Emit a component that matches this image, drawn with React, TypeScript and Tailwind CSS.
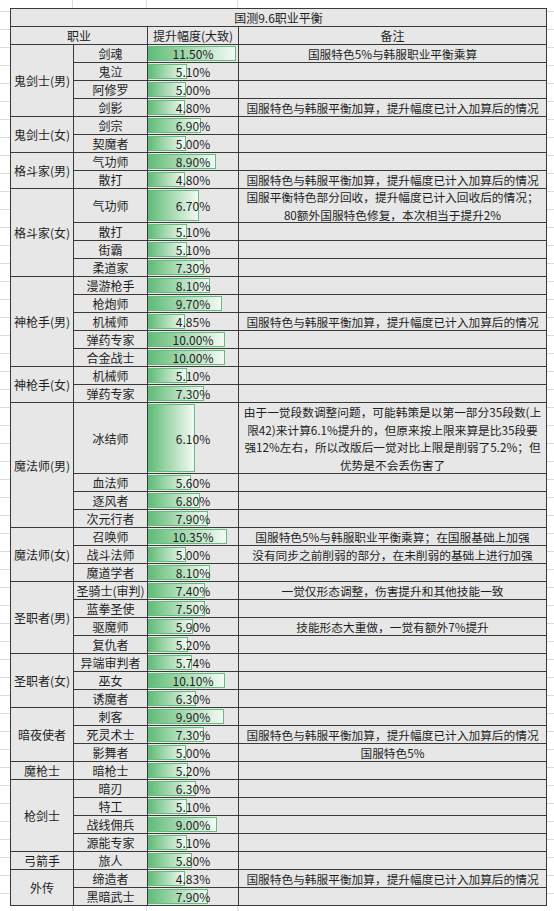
import React from "react";

type Row = { name: string; value: number; note?: React.ReactNode };
type Group = { name: string; rows: Row[] };

const ADD = "国服特色与韩服平衡加算，提升幅度已计入加算后的情况";

const groups: Group[] = [
  {
    name: "鬼剑士(男)",
    rows: [
      { name: "剑魂", value: 11.5, note: "国服特色5%与韩服职业平衡乘算" },
      { name: "鬼泣", value: 5.1 },
      { name: "阿修罗", value: 5.0 },
      { name: "剑影", value: 4.8, note: ADD },
    ],
  },
  { name: "鬼剑士(女)", rows: [{ name: "剑宗", value: 6.9 }, { name: "契魔者", value: 5.0 }] },
  { name: "格斗家(男)", rows: [{ name: "气功师", value: 8.9 }, { name: "散打", value: 4.8, note: ADD }] },
  {
    name: "格斗家(女)",
    rows: [
      {
        name: "气功师",
        value: 6.7,
        note: (
          <>
            国服平衡特色部分回收，提升幅度已计入回收后的情况；
            <br />
            80额外国服特色修复，本次相当于提升2%
          </>
        ),
      },
      { name: "散打", value: 5.1 },
      { name: "街霸", value: 5.1 },
      { name: "柔道家", value: 7.3 },
    ],
  },
  {
    name: "神枪手(男)",
    rows: [
      { name: "漫游枪手", value: 8.1 },
      { name: "枪炮师", value: 9.7 },
      { name: "机械师", value: 4.85, note: ADD },
      { name: "弹药专家", value: 10.0 },
      { name: "合金战士", value: 10.0 },
    ],
  },
  { name: "神枪手(女)", rows: [{ name: "机械师", value: 5.1 }, { name: "弹药专家", value: 7.3 }] },
  {
    name: "魔法师(男)",
    rows: [
      {
        name: "冰结师",
        value: 6.1,
        note: (
          <>
            由于一觉段数调整问题，可能韩策是以第一部分35段数(上
            <br />
            限42)来计算6.1%提升的，但原来按上限来算是比35段要
            <br />
            强12%左右，所以改版后一觉对比上限是削弱了5.2%；但
            <br />
            优势是不会丢伤害了
          </>
        ),
      },
      { name: "血法师", value: 5.6 },
      { name: "逐风者", value: 6.8 },
      { name: "次元行者", value: 7.9 },
    ],
  },
  {
    name: "魔法师(女)",
    rows: [
      { name: "召唤师", value: 10.35, note: "国服特色5%与韩服职业平衡乘算；在国服基础上加强" },
      { name: "战斗法师", value: 5.0, note: "没有同步之前削弱的部分，在未削弱的基础上进行加强" },
      { name: "魔道学者", value: 8.1 },
    ],
  },
  {
    name: "圣职者(男)",
    rows: [
      { name: "圣骑士(审判)", value: 7.4, note: "一觉仅形态调整，伤害提升和其他技能一致" },
      { name: "蓝拳圣使", value: 7.5 },
      { name: "驱魔师", value: 5.9, note: "技能形态大重做，一觉有额外7%提升" },
      { name: "复仇者", value: 5.2 },
    ],
  },
  {
    name: "圣职者(女)",
    rows: [
      { name: "异端审判者", value: 5.74 },
      { name: "巫女", value: 10.1 },
      { name: "诱魔者", value: 6.3 },
    ],
  },
  {
    name: "暗夜使者",
    rows: [
      { name: "刺客", value: 9.9 },
      { name: "死灵术士", value: 7.3, note: ADD },
      { name: "影舞者", value: 5.0, note: "国服特色5%" },
    ],
  },
  { name: "魔枪士", rows: [{ name: "暗枪士", value: 5.2 }] },
  {
    name: "枪剑士",
    rows: [
      { name: "暗刃", value: 6.3 },
      { name: "特工", value: 5.1 },
      { name: "战线佣兵", value: 9.0 },
      { name: "源能专家", value: 5.1 },
    ],
  },
  { name: "弓箭手", rows: [{ name: "旅人", value: 5.8 }] },
  { name: "外传", rows: [{ name: "缔造者", value: 4.83, note: ADD }, { name: "黑暗武士", value: 7.9 }] },
];

const spanClass: Record<number, string> = {
  1: "row-span-1",
  2: "row-span-2",
  3: "row-span-3",
  4: "row-span-4",
  5: "row-span-5",
};

const cell = "bg-[#e7e7e7] flex items-center justify-center text-center whitespace-nowrap";

function Bar({ value }: { value: number }) {
  const w = (value / 11.5) * 88;
  return (
    <div className={`${cell} relative`}>
      <div
        className="absolute left-0 top-[1px] bottom-[1px] border border-[#63be7b] bg-linear-to-r from-[#5fbc78] to-[#f2faf4]"
        style={{ width: `${w}px` }}
      />
      <span className="relative">{value.toFixed(2)}%</span>
    </div>
  );
}

export default function App() {
  const gridLines = Array.from({ length: 51 });
  return (
    <div
      className="w-[554px] h-[911px] bg-white overflow-hidden flex text-[12px] leading-[17px] text-[#1e1e1e]"
      style={{ fontFamily: '"Noto Sans CJK SC", "Noto Sans", sans-serif' }}
    >
      {/* left margin gridlines */}
      <div className="w-[10px] flex flex-col shrink-0">
        <div className="h-[12px] shrink-0 border-b border-[#dcdcdc]" />
        {gridLines.map((_, i) => (
          <div key={i} className="h-[18px] shrink-0 border-b border-[#dcdcdc]" />
        ))}
      </div>

      <div className="w-[537px] flex flex-col shrink-0">
        <div className="h-[8px] flex shrink-0">
          <div className="w-[63px] border-r border-[#dcdcdc]" />
          <div className="w-[74px] border-r border-[#dcdcdc]" />
          <div className="w-[91px] border-r border-[#dcdcdc]" />
          <div className="flex-1" />
        </div>

        <div className="grid grid-cols-[62px_73px_90px_307px] grid-rows-[17px_17px_repeat(8,17px)_33px_repeat(10,17px)_70px_repeat(24,17px)] gap-px bg-[#3a3a3a] border border-[#3a3a3a]">
          <div className={`${cell} col-span-4`}>国测9.6职业平衡</div>
          <div className={`${cell} col-span-2`}>职业</div>
          <div className={cell}>提升幅度(大致)</div>
          <div className={cell}>备注</div>
          {groups.map((g) => (
            <React.Fragment key={g.name}>
              <div className={`${cell} ${spanClass[g.rows.length]}`}>{g.name}</div>
              {g.rows.map((r) => (
                <React.Fragment key={g.name + r.name}>
                  <div className={cell}>{r.name}</div>
                  <Bar value={r.value} />
                  <div className={`${cell} text-[11.7px] leading-[17.5px]`}>{r.note}</div>
                </React.Fragment>
              ))}
            </React.Fragment>
          ))}
        </div>

        <div className="flex-1 flex">
          <div className="w-[63px] border-r border-[#dcdcdc]" />
          <div className="w-[74px] border-r border-[#dcdcdc]" />
          <div className="w-[91px] border-r border-[#dcdcdc]" />
          <div className="flex-1" />
        </div>
      </div>

      {/* right margin gridlines */}
      <div className="flex-1 flex flex-col">
        <div className="h-[12px] shrink-0 border-b border-[#dcdcdc]" />
        {gridLines.map((_, i) => (
          <div key={i} className="h-[18px] shrink-0 border-b border-[#dcdcdc]" />
        ))}
      </div>
    </div>
  );
}
